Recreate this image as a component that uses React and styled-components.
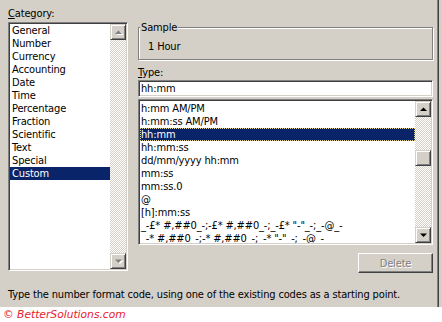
import React from 'react';
import styled, {createGlobalStyle, css} from 'styled-components';

const FACE = '#d4d0c8';
const SHADOW = '#808080';
const DARK = '#404040';
const NAVY = '#0a246a';

const categories = [
    'General', 'Number', 'Currency', 'Accounting', 'Date', 'Time',
    'Percentage', 'Fraction', 'Scientific', 'Text', 'Special', 'Custom',
];

const formats = [
    'h:mm AM/PM',
    'h:mm:ss AM/PM',
    'hh:mm',
    'hh:mm:ss',
    'dd/mm/yyyy hh:mm',
    'mm:ss',
    'mm:ss.0',
    '@',
    '[h]:mm:ss',
    '_-£* #,##0_-;-£* #,##0_-;_-£* "-"_-;_-@_-',
    '_-* #,##0_-;-* #,##0_-;_-* "-"_-;_-@_-',
];

const Arrow = ({up, disabled}) => (
    <svg width="7" height="5" viewBox="0 0 7 5" style={{overflow: 'visible'}}>
        {disabled && (
            <path d={up ? 'M4.5 1 L8 4.5 L1 4.5 Z' : 'M1 1 L8 1 L4.5 4.5 Z'}
                  transform="translate(0.5 0.5)" fill="#fff"/>
        )}
        <path d={up ? 'M3.5 0.5 L7 4 L0 4 Z' : 'M0 0.5 L7 0.5 L3.5 4 Z'}
              fill={disabled ? SHADOW : '#000'}/>
    </svg>
);

const ScrollBar = ({disabled, thumb}) => (
    <Bar>
        <ScrollButton><Arrow up disabled={disabled}/></ScrollButton>
        <Track>
            {thumb !== undefined && <Thumb $offset={thumb}/>}
        </Track>
        <ScrollButton><Arrow disabled={disabled}/></ScrollButton>
    </Bar>
);

const App = () => {
    return (
        <Frame>
            <GlobalStyle/>
            <Dialog>
                <TopRow>
                    <LeftCol>
                        <Label><u>C</u>ategory:</Label>
                        <ListBox $height={249}>
                            <Items>
                                {categories.map((c) => (
                                    <Row key={c} $selected={c === 'Custom'}>{c}</Row>
                                ))}
                            </Items>
                            <ScrollBar disabled/>
                        </ListBox>
                    </LeftCol>
                    <RightCol>
                        <Group>
                            <Legend>Sample</Legend>
                            <SampleValue>1 Hour</SampleValue>
                        </Group>
                        <TypeLabel><u>T</u>ype:</TypeLabel>
                        <TextBox>hh:mm</TextBox>
                        <ListBox $height={146} $gap={2}>
                            <Items $offset={1}>
                                {formats.map((f) => (
                                    <Row key={f} $selected={f === 'hh:mm'} $focused={f === 'hh:mm'} $tight>
                                        {f}
                                    </Row>
                                ))}
                            </Items>
                            <ScrollBar thumb={33}/>
                        </ListBox>
                        <DeleteButton>Delete</DeleteButton>
                    </RightCol>
                </TopRow>
                <Hint>Type the number format code, using one of the existing codes as a starting point.</Hint>
            </Dialog>
            <Watermark>© BetterSolutions.com</Watermark>
        </Frame>
    );
};

export default App;

const GlobalStyle = createGlobalStyle`
    html, body {
        margin: 0;
        padding: 0;
        background: #fff;
    }

    body {
        font-family: "DejaVu Sans Condensed", "DejaVu Sans", sans-serif;
        font-stretch: condensed;
        font-size: 11px;
        letter-spacing: -0.15px;
        color: #000;
    }
`;

const Frame = styled.div`
    width: 442px;
    height: 322px;
    display: flex;
    flex-direction: column;
    overflow: hidden;
`;

const Dialog = styled.div`
    height: 307px;
    box-sizing: border-box;
    background: ${FACE};
    padding: 6px 9px 0 8px;
    display: flex;
    flex-direction: column;
    box-shadow: inset -3px 0 0 ${FACE}, inset -4px 0 0 ${DARK}, inset -5px 0 0 ${SHADOW};
`;

const TopRow = styled.div`
    display: flex;
    gap: 10px;
    height: 267px;
`;

const LeftCol = styled.div`
    width: 120px;
    display: flex;
    flex-direction: column;
`;

const RightCol = styled.div`
    width: 295px;
    display: flex;
    flex-direction: column;
`;

const Label = styled.div`
    height: 16px;
    line-height: 15px;
`;

const ListBox = styled.div`
    height: ${(p) => p.$height}px;
    margin-top: ${(p) => p.$gap || 0}px;
    box-sizing: border-box;
    display: flex;
    background: #fff;
    border: 1px solid;
    border-color: ${SHADOW} #fff #fff ${SHADOW};
    padding: 1px;
    box-shadow: inset 1px 1px 0 ${DARK}, inset -1px -1px 0 ${FACE};
`;

const Items = styled.div`
    flex: 1;
    min-width: 0;
    overflow: hidden;
    padding-top: ${(p) => p.$offset || 0}px;
`;

const Row = styled.div`
    height: 13px;
    line-height: 13px;
    padding-left: ${(p) => (p.$tight ? 1 : 2)}px;
    white-space: nowrap;
    box-sizing: border-box;
    color: ${(p) => (p.$selected ? '#fff' : '#000')};
    background: ${(p) => (p.$selected ? NAVY : 'transparent')};
    ${(p) => p.$focused && css`
        outline: 1px dotted #e6d890;
        outline-offset: -1px;
    `}
`;

const Bar = styled.div`
    width: 16px;
    display: flex;
    flex-direction: column;
`;

const raised = css`
    background: ${FACE};
    box-sizing: border-box;
    border: 1px solid;
    border-color: ${FACE} ${DARK} ${DARK} ${FACE};
    box-shadow: inset 1px 1px 0 #fff, inset -1px -1px 0 ${SHADOW};
`;

const ScrollButton = styled.div`
    ${raised};
    height: 16px;
    display: flex;
    align-items: center;
    justify-content: center;
`;

const Track = styled.div`
    flex: 1;
    background-color: #fff;
    background-image: repeating-conic-gradient(${FACE} 0% 25%, #fff 0% 50%);
    background-size: 2px 2px;
`;

const Thumb = styled.div`
    ${raised};
    height: 16px;
    margin-top: ${(p) => p.$offset}px;
`;

const Group = styled.fieldset`
    margin: 15px 0 0;
    padding: 6px 0;
    min-width: 0;
    border: 1px solid ${SHADOW};
    box-shadow: inset 1px 1px 0 #fff, 1px 1px 0 #fff;
`;

const Legend = styled.legend`
    margin-left: 1px;
    padding: 0 1px;
    line-height: 13px;
    background: ${FACE};
`;

const SampleValue = styled.div`
    line-height: 13px;
    padding-left: 9px;
`;

const TypeLabel = styled.div`
    margin-top: 5px;
    line-height: 15px;
`;

const TextBox = styled.div`
    height: 17px;
    box-sizing: border-box;
    background: #fff;
    border: 1px solid;
    border-color: ${SHADOW} #fff #fff ${SHADOW};
    box-shadow: inset 1px 1px 0 ${DARK}, inset -1px -1px 0 ${FACE};
    padding: 1px 2px;
    line-height: 13px;
`;

const DeleteButton = styled.div`
    ${raised};
    border-color: #fff ${DARK} ${DARK} #fff;
    box-shadow: inset -1px -1px 0 ${SHADOW};
    align-self: flex-end;
    width: 75px;
    height: 20px;
    margin-top: 8px;
    display: flex;
    align-items: center;
    justify-content: center;
    color: ${SHADOW};
    text-shadow: 1px 1px 0 #fff;
`;

const Hint = styled.div`
    margin-top: 15px;
    line-height: 13px;
`;

const Watermark = styled.div`
    height: 15px;
    background: #fff;
    padding-left: 3px;
    line-height: 15px;
    color: #e8202e;
    font-family: "DejaVu Sans", sans-serif;
    font-stretch: normal;
    font-style: italic;
    font-size: 10.7px;
    letter-spacing: 0;
`;
